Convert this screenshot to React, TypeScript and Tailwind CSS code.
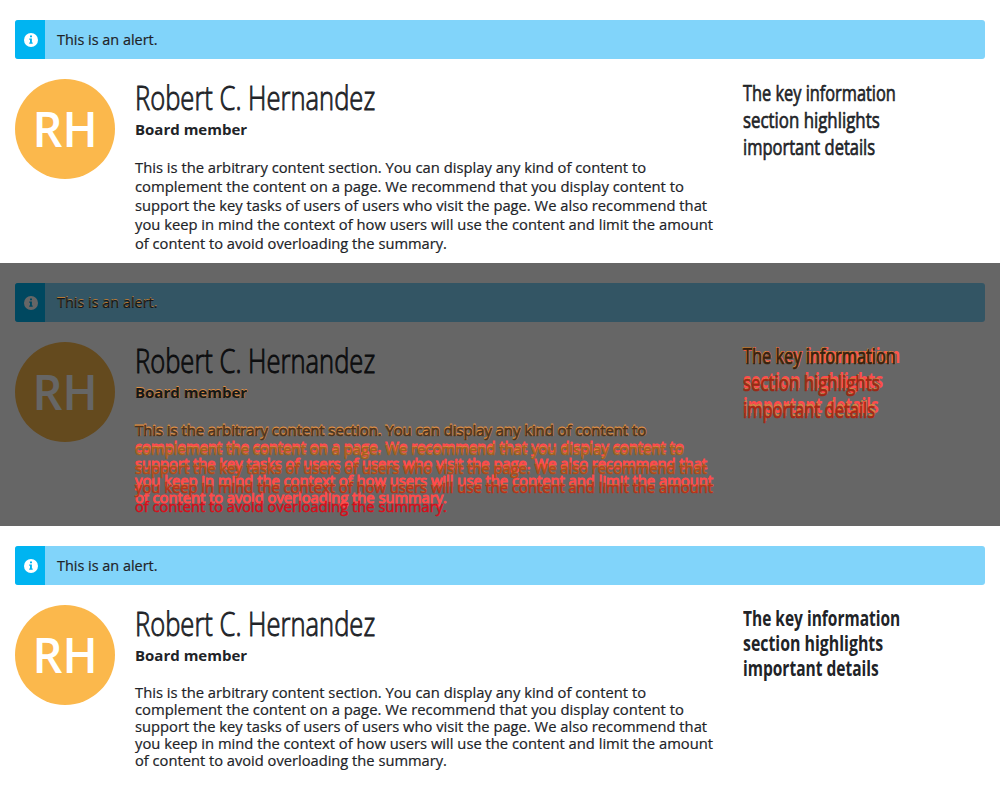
import { useLayoutEffect, useRef, useState } from "react";

type FitProps = { text: string; width: number; className?: string; center?: boolean };

// Renders a single line condensed or expanded to an exact width.
function Fit({ text, width, className = "", center = false }: FitProps) {
  const ref = useRef<HTMLSpanElement>(null);
  const [scale, setScale] = useState(1);
  useLayoutEffect(() => {
    if (ref.current) setScale(width / ref.current.offsetWidth);
  }, [width, text]);
  return (
    <span className={`block whitespace-nowrap ${className}`}>
      <span
        ref={ref}
        className={`inline-block ${center ? "origin-center" : "origin-left"}`}
        style={{ transform: `scaleX(${scale})` }}
      >
        {text}
      </span>
    </span>
  );
}

const body: [string, number][] = [
  ["This is the arbitrary content section. You can display any kind of content to", 511],
  ["complement the content on a page. We recommend that you display content to", 549],
  ["support the key tasks of users of users who visit the page. We also recommend that", 572],
  ["you keep in mind the context of how users will use the content and limit the amount", 578],
  ["of content to avoid overloading the summary.", 312],
];
const keyBefore: [string, number][] = [
  ["The key information", 153],
  ["section highlights", 137],
  ["important details", 132],
];
const keyAfter: [string, number][] = [
  ["The key information", 157],
  ["section highlights", 140],
  ["important details", 136],
];

// Diff tints, one entry per line: removed pixels are dark, added pixels bright.
const bodyOld = [
  "text-[#4a3220] [text-shadow:0_-1px_0_#e08f42,1px_0_0_#b9702a]",
  "text-[#a4601f] [text-shadow:0_-1px_0_#e08f42]",
  "text-[#b04a1c] [text-shadow:0_-1px_0_#c8782e]",
  "text-[#b8321c] [text-shadow:0_-1px_0_#c8782e]",
  "text-[#d80e1a]",
];
const bodyNew = [
  "text-[#e08f42]",
  "text-[#ff4b4b]",
  "text-[#ff4b4b]",
  "text-[#ff4b4b]",
  "text-[#ff4b4b]",
];
const keyOld = [
  "text-[#35200f] [text-shadow:-1px_-1px_0_#d58a3f,1px_0_0_#b9702a]",
  "text-[#9c2815] [text-shadow:1px_-1px_0_#d58a3f]",
  "text-[#a82815] [text-shadow:1px_-2px_0_#d58a3f]",
];
const keyNew = ["text-[#ff5548]", "text-[#ff4b4b]", "text-[#ff4b4b]"];

type CopyProps = { after?: boolean; tints?: string[]; className?: string };

function BodyText({ after = false, tints = [], className = "" }: CopyProps) {
  return (
    <div
      className={`text-[15px] ${tints.length ? (after ? "[-webkit-text-stroke:1px]" : "[-webkit-text-stroke:0.5px]") : "[-webkit-text-stroke:0.2px]"} ${after ? "leading-[17px]" : "leading-[19px]"} ${className}`}
    >
      {body.map(([t, w], i) => (
        <Fit key={t} text={t} width={w} className={tints[i]} />
      ))}
    </div>
  );
}

function KeyInfo({ after = false, tints = [], className = "" }: CopyProps) {
  return (
    <div
      className={`text-[22px] ${after ? "leading-[25px] font-bold" : "leading-[27px] font-normal [-webkit-text-stroke:0.7px]"} ${className}`}
    >
      {(after ? keyAfter : keyBefore).map(([t, w], i) => (
        <Fit key={t} text={t} width={w} className={tints[i]} />
      ))}
    </div>
  );
}

function InfoIcon() {
  return (
    <svg viewBox="0 0 14 14" className="size-3.5">
      <circle cx="7" cy="7" r="7" className="fill-white" />
      <path d="M6 2.5h2v1.7H6zM5.2 5.6h2.7v4h.8v1.2H5.2V9.6H6V6.8h-.8z" className="fill-[#00b4f1]" />
    </svg>
  );
}

function Summary({ mode }: { mode: "before" | "diff" | "after" }) {
  const after = mode === "after";
  const diff = mode === "diff";
  return (
    <section className="relative h-[263px] bg-white px-[15px] pt-5 text-[#212327]">
      <div className="flex h-[39px] overflow-hidden rounded-[3px] bg-[#81d4fa]">
        <div className="flex w-[30px] items-center justify-center bg-[#00b4f1] pl-px">
          <InfoIcon />
        </div>
        <div
          className={`pl-3 text-[15px] leading-[39px] [-webkit-text-stroke:0.2px] ${diff ? "relative z-10 text-[#14171a] [text-shadow:0_-1px_0_#b87a35]" : ""}`}
        >
          <Fit text="This is an alert." width={101} />
        </div>
      </div>
      <div className="mt-5 flex">
        <div className="flex size-[100px] items-center justify-center rounded-full bg-[#fbb84c] pb-0.5 text-[49px] leading-none font-semibold text-white">
          <Fit text="RH" width={65} center />
        </div>
        <div className="ml-5 w-[607px]">
          <div className="text-[33px] leading-[38px] font-light [-webkit-text-stroke:0.9px]">
            <Fit text="Robert C. Hernandez" width={240} />
          </div>
          <div
            className={`text-[15px] leading-[24px] font-bold ${diff ? "relative z-10 text-[#14171a] [text-shadow:0_-1px_0_#e08f42,1px_0_0_#a9651c]" : ""}`}
          >
            <Fit text="Board member" width={112} />
          </div>
          <div className={`mt-[17px] ${diff ? "relative z-10" : ""}`}>
            {diff && <BodyText after tints={bodyNew} className="absolute inset-x-0 top-0" />}
            <BodyText after={after} tints={diff ? bodyOld : []} className={diff ? "relative" : ""} />
          </div>
        </div>
        <div className={`w-[228px] pl-px ${diff ? "relative z-10" : ""}`}>
          {diff && <KeyInfo after tints={keyNew} className="absolute top-0 left-px" />}
          <KeyInfo after={after} tints={diff ? keyOld : []} className={diff ? "relative" : ""} />
        </div>
      </div>
      {diff && <div className="absolute inset-0 bg-black/60" />}
    </section>
  );
}

export default function App() {
  return (
    <main className="h-[789px] w-[1000px] overflow-hidden bg-white font-['Open_Sans',sans-serif]">
      <Summary mode="before" />
      <Summary mode="diff" />
      <Summary mode="after" />
    </main>
  );
}
